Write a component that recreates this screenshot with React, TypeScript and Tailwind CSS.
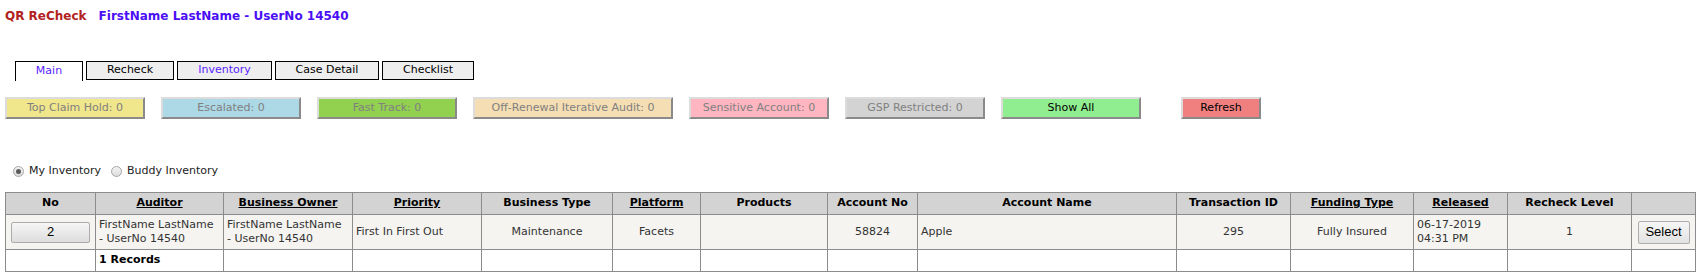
import React from "react";

const F = { fontFamily: "'DejaVu Sans', Verdana, sans-serif" };

const tabs = [
  { label: "Main", w: "w-[68px]", active: true, color: "text-[#5a1eff]" },
  { label: "Recheck", w: "w-[88px]", active: false, color: "text-black" },
  { label: "Inventory", w: "w-[95px]", active: false, color: "text-[#5a1eff]" },
  { label: "Case Detail", w: "w-[104px]", active: false, color: "text-black" },
  { label: "Checklist", w: "w-[92px]", active: false, color: "text-black" },
];

const buttons = [
  { label: "Top Claim Hold: 0", cls: "w-[140px] bg-[#f0e68c] text-[#808080]" },
  { label: "Escalated: 0", cls: "w-[140px] bg-[#add8e6] text-[#808080]" },
  { label: "Fast Track: 0", cls: "w-[140px] bg-[#92d050] text-[#808080]" },
  { label: "Off-Renewal Iterative Audit: 0", cls: "w-[200px] bg-[#f5deb3] text-[#808080]" },
  { label: "Sensitive Account: 0", cls: "w-[140px] bg-[#ffb6c1] text-[#808080]" },
  { label: "GSP Restricted: 0", cls: "w-[140px] bg-[#d3d3d3] text-[#808080]" },
  { label: "Show All", cls: "w-[140px] bg-[#90ee90] text-black" },
];

const headers: { label: string; w: string; link?: boolean }[] = [
  { label: "No", w: "w-[90px]" },
  { label: "Auditor", w: "w-[128px]", link: true },
  { label: "Business Owner", w: "w-[129px]", link: true },
  { label: "Priority", w: "w-[129px]", link: true },
  { label: "Business Type", w: "w-[131px]" },
  { label: "Platform", w: "w-[88px]", link: true },
  { label: "Products", w: "w-[127px]" },
  { label: "Account No", w: "w-[90px]" },
  { label: "Account Name", w: "w-[259px]" },
  { label: "Transaction ID", w: "w-[114px]" },
  { label: "Funding Type", w: "w-[123px]", link: true },
  { label: "Released", w: "w-[94px]", link: true },
  { label: "Recheck Level", w: "w-[124px]" },
  { label: "", w: "w-[64px]" },
];

function Radio({ checked, label }: { checked: boolean; label: string }) {
  return (
    <span className="flex items-center">
      <span className="w-[11px] h-[11px] rounded-full border border-[#a6a6a6] bg-gradient-to-b from-[#f4f4f4] to-[#dcdcdc] flex items-center justify-center">
        {checked && <span className="w-[5px] h-[5px] rounded-full bg-[#5a5a5a]" />}
      </span>
      <span className="ml-[5px] text-[11px] text-[#222]">{label}</span>
    </span>
  );
}

export default function App() {
  const td = "border border-[#8c8c8c] px-[3px] text-[11px] text-[#333] p-0";
  return (
    <div className="w-[1702px] h-[278px] bg-white overflow-hidden px-[5px]" style={F}>
      <div className="h-[31px] flex items-center text-[12px] font-bold">
        <span className="text-[#b22222]">QR ReCheck</span>
        <span className="ml-[12px] text-[#4b0ff5]">FirstName LastName - UserNo 14540</span>
      </div>
      <div className="mt-[30px] ml-[10px] flex gap-[3px] h-[19px]">
        {tabs.map((t) => (
          <div
            key={t.label}
            className={`${t.w} h-[19px] flex items-center justify-center text-[11px] border border-black ${t.color} ${
              t.active ? "bg-white border-b-0 h-[20px]" : "bg-[#eeeeee]"
            }`}
          >
            {t.label}
          </div>
        ))}
      </div>
      <div className="mt-[17px] flex h-[22px]">
        {buttons.map((b) => (
          <div
            key={b.label}
            className={`${b.cls} mr-[16px] h-[22px] flex items-center justify-center text-[11px] border-2 border-t-[#dcdcdc] border-l-[#dcdcdc] border-b-[#8a8a8a] border-r-[#8a8a8a]`}
          >
            {b.label}
          </div>
        ))}
        <div className="ml-[24px] w-[80px] h-[22px] flex items-center justify-center text-[11px] text-black bg-[#f08080] border-2 border-t-[#dcdcdc] border-l-[#dcdcdc] border-b-[#8a8a8a] border-r-[#8a8a8a]">
          Refresh
        </div>
      </div>
      <div className="mt-[44px] ml-[8px] h-[16px] flex items-center gap-[10px]">
        <Radio checked label="My Inventory" />
        <Radio checked={false} label="Buddy Inventory" />
      </div>
      <table className="mt-[13px] table-fixed border-collapse w-[1690px]">
        <thead>
          <tr className="h-[22px] bg-[#d3d3d3]">
            {headers.map((h, i) => (
              <th key={i} className={`${h.w} border border-[#8c8c8c] p-0 text-[11px] font-bold text-black text-center`}>
                {h.link ? <span className="underline">{h.label}</span> : h.label}
              </th>
            ))}
          </tr>
        </thead>
        <tbody>
          <tr className="h-[35px] bg-[#f5f4f1]">
            <td className={`${td} text-center`}>
              <span
                className="mx-auto w-[79px] h-[21px] flex items-center justify-center text-[13px] text-black bg-gradient-to-b from-[#f6f6f6] to-[#dddddd] border border-[#acacac] rounded-[2px]"
                style={{ fontFamily: "'Liberation Sans', Arial, sans-serif" }}
              >
                2
              </span>
            </td>
            <td className={`${td} px-[3px] text-left leading-[14px]`}>
              FirstName LastName
              <br />- UserNo 14540
            </td>
            <td className={`${td} px-[3px] text-left leading-[14px]`}>
              FirstName LastName
              <br />- UserNo 14540
            </td>
            <td className={`${td} px-[3px] text-left`}>First In First Out</td>
            <td className={`${td} text-center`}>Maintenance</td>
            <td className={`${td} text-center`}>Facets</td>
            <td className={td}></td>
            <td className={`${td} text-center`}>58824</td>
            <td className={`${td} px-[3px] text-left`}>Apple</td>
            <td className={`${td} text-center`}>295</td>
            <td className={`${td} text-center`}>Fully Insured</td>
            <td className={`${td} px-[3px] text-left leading-[14px]`}>
              06-17-2019
              <br />
              04:31 PM
            </td>
            <td className={`${td} text-center`}>1</td>
            <td className={`${td} text-center`}>
              <span
                className="mx-auto w-[52px] h-[23px] flex items-center justify-center text-[13px] text-black bg-gradient-to-b from-[#f6f6f6] to-[#e2e2e2] border border-[#adadad] rounded-[2px]"
                style={{ fontFamily: "'Liberation Sans', Arial, sans-serif" }}
              >
                Select
              </span>
            </td>
          </tr>
          <tr className="h-[22px] bg-white">
            <td className={td}></td>
            <td className={`${td} px-[3px] font-bold text-black text-[11px]`}>1 Records</td>
            {Array.from({ length: 12 }).map((_, i) => (
              <td key={i} className={td}></td>
            ))}
          </tr>
        </tbody>
      </table>
    </div>
  );
}
